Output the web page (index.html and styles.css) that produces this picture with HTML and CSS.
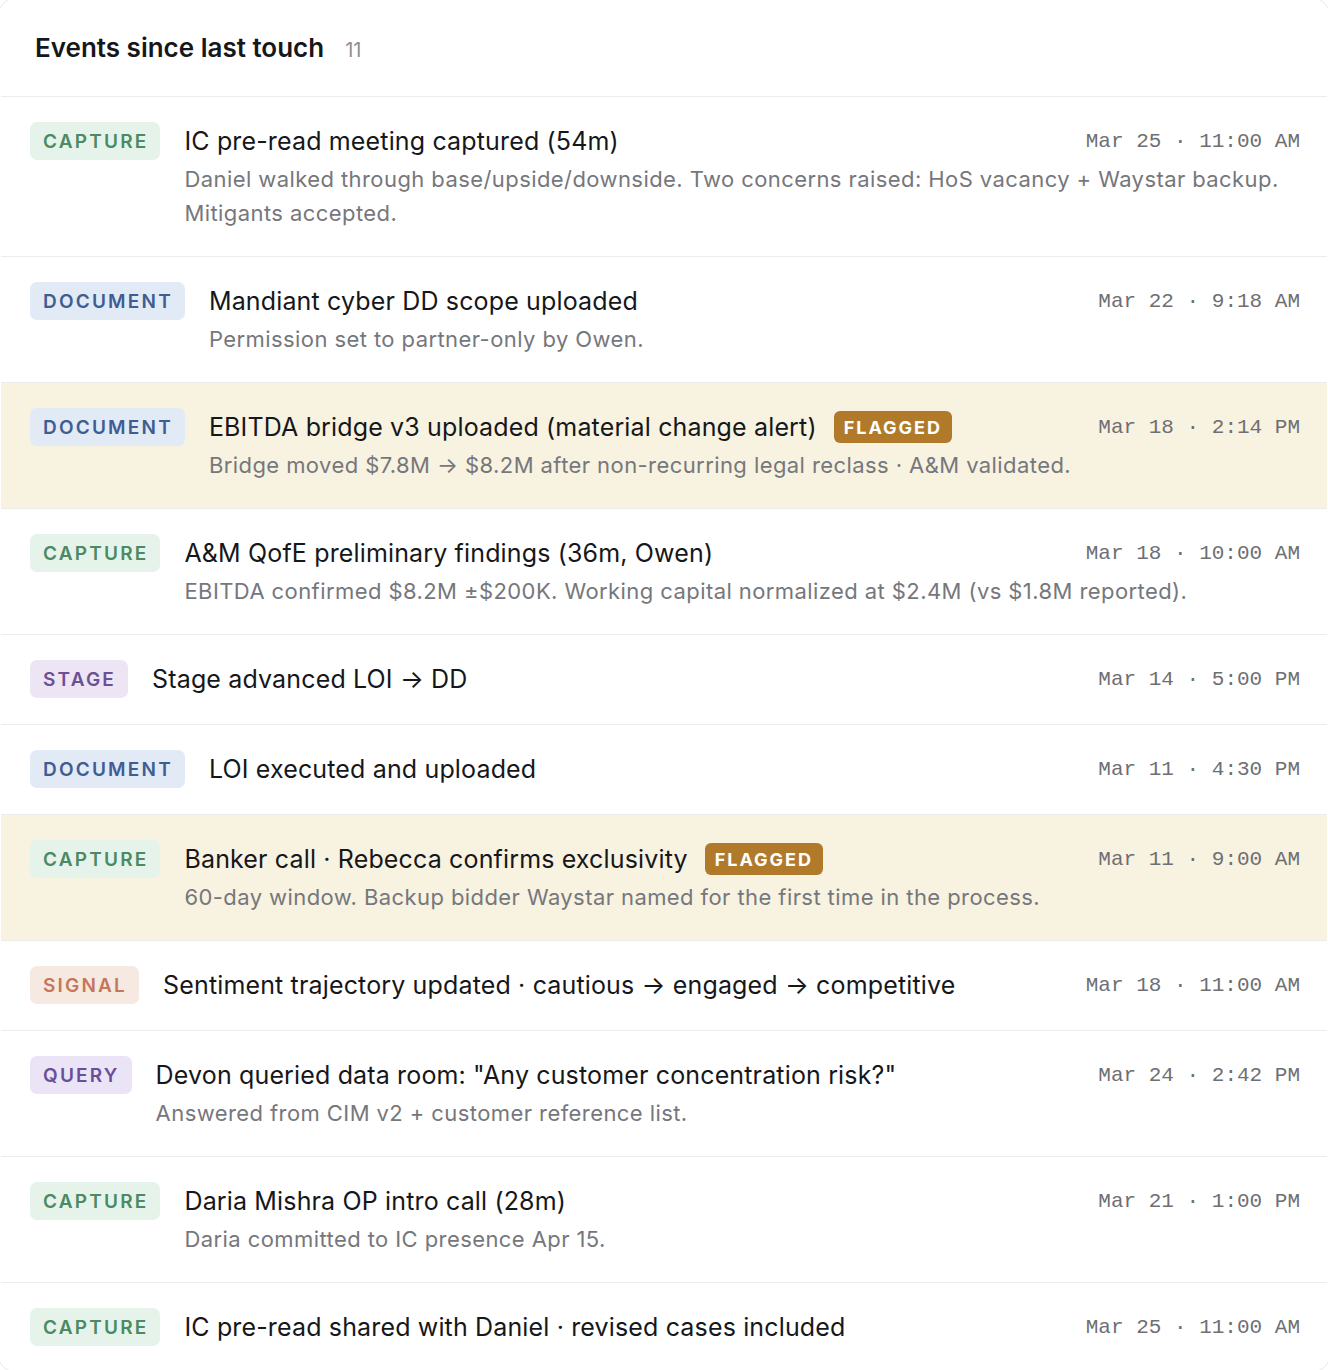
FILE: index.html
```html
<!DOCTYPE html>
<html lang="en">
<head>
<meta charset="utf-8">
<title>Events since last touch</title>
<link rel="stylesheet" href="styles.css">
</head>
<body>
<section class="card">
  <header class="card-head">
    <h2 class="card-title">Events since last touch</h2>
    <span class="count">11</span>
  </header>
  <ul class="events">
    <li class="event">
      <span class="tag tag-capture">Capture</span>
      <div class="body">
        <div class="head"><span class="title">IC pre-read meeting captured (54m)</span><time class="when">Mar 25 · 11:00 AM</time></div>
        <p class="desc">Daniel walked through base/upside/downside. Two concerns raised: HoS vacancy + Waystar backup. Mitigants accepted.</p>
      </div>
    </li>
    <li class="event">
      <span class="tag tag-document">Document</span>
      <div class="body">
        <div class="head"><span class="title">Mandiant cyber DD scope uploaded</span><time class="when">Mar 22 · 9:18 AM</time></div>
        <p class="desc">Permission set to partner-only by Owen.</p>
      </div>
    </li>
    <li class="event flagged">
      <span class="tag tag-document">Document</span>
      <div class="body">
        <div class="head"><span class="title">EBITDA bridge v3 uploaded (material change alert)</span><span class="flag">Flagged</span><time class="when">Mar 18 · 2:14 PM</time></div>
        <p class="desc">Bridge moved $7.8M → $8.2M after non-recurring legal reclass · A&amp;M validated.</p>
      </div>
    </li>
    <li class="event">
      <span class="tag tag-capture">Capture</span>
      <div class="body">
        <div class="head"><span class="title">A&amp;M QofE preliminary findings (36m, Owen)</span><time class="when">Mar 18 · 10:00 AM</time></div>
        <p class="desc">EBITDA confirmed $8.2M ±$200K. Working capital normalized at $2.4M (vs $1.8M reported).</p>
      </div>
    </li>
    <li class="event">
      <span class="tag tag-stage">Stage</span>
      <div class="body">
        <div class="head"><span class="title">Stage advanced LOI → DD</span><time class="when">Mar 14 · 5:00 PM</time></div>
      </div>
    </li>
    <li class="event">
      <span class="tag tag-document">Document</span>
      <div class="body">
        <div class="head"><span class="title">LOI executed and uploaded</span><time class="when">Mar 11 · 4:30 PM</time></div>
      </div>
    </li>
    <li class="event flagged">
      <span class="tag tag-capture">Capture</span>
      <div class="body">
        <div class="head"><span class="title">Banker call · Rebecca confirms exclusivity</span><span class="flag">Flagged</span><time class="when">Mar 11 · 9:00 AM</time></div>
        <p class="desc">60-day window. Backup bidder Waystar named for the first time in the process.</p>
      </div>
    </li>
    <li class="event">
      <span class="tag tag-signal">Signal</span>
      <div class="body">
        <div class="head"><span class="title">Sentiment trajectory updated · cautious → engaged → competitive</span><time class="when">Mar 18 · 11:00 AM</time></div>
      </div>
    </li>
    <li class="event">
      <span class="tag tag-query">Query</span>
      <div class="body">
        <div class="head"><span class="title">Devon queried data room: "Any customer concentration risk?"</span><time class="when">Mar 24 · 2:42 PM</time></div>
        <p class="desc">Answered from CIM v2 + customer reference list.</p>
      </div>
    </li>
    <li class="event">
      <span class="tag tag-capture">Capture</span>
      <div class="body">
        <div class="head"><span class="title">Daria Mishra OP intro call (28m)</span><time class="when">Mar 21 · 1:00 PM</time></div>
        <p class="desc">Daria committed to IC presence Apr 15.</p>
      </div>
    </li>
    <li class="event">
      <span class="tag tag-capture">Capture</span>
      <div class="body">
        <div class="head"><span class="title">IC pre-read shared with Daniel · revised cases included</span><time class="when">Mar 25 · 11:00 AM</time></div>
      </div>
    </li>
  </ul>
</section>
</body>
</html>
```

FILE: styles.css
```css
* { box-sizing: border-box; }

html, body {
  margin: 0;
  padding: 0;
  background: #ffffff;
  overflow: hidden;
}

body {
  font-family: Inter, "Noto Sans", "Liberation Sans", sans-serif;
  color: #17181a;
}

.card {
  background: #ffffff;
  border: 1px solid #e8e8e6;
  border-radius: 24px;
  overflow: hidden;
  margin: -4px -4px 0 -4px;
  padding: 4px 4px 0 4px;
}

.card-head {
  display: flex;
  align-items: baseline;
  gap: 21px;
  height: 96px;
  padding: 30px 34px 0;
  border-bottom: 1px solid #ececea;
}

.card-title {
  margin: 0;
  font-size: 26px;
  font-weight: 600;
  line-height: 34px;
  color: #16171a;
}

.count {
  font-size: 20px;
  color: #8d8f94;
}

.events {
  list-style: none;
  margin: 0;
  padding: 0;
}

.event {
  display: flex;
  align-items: flex-start;
  gap: 24px;
  padding: 25px 27px 26px 29px;
  border-bottom: 1px solid #ececea;
}

.event.flagged {
  background: #f8f2e0;
}

.tag {
  flex: none;
  display: inline-flex;
  align-items: center;
  height: 38px;
  padding: 0 12px 0 13px;
  border-radius: 7px;
  font-size: 19px;
  font-weight: 600;
  letter-spacing: 2.2px;
  text-transform: uppercase;
}

.tag-capture { background: #e6f3ea; color: #4b8a62; }
.tag-document { background: #e2eaf5; color: #3f5d92; }
.tag-stage { background: #ede5f3; color: #6d4f96; }
.tag-signal { background: #f6e9e1; color: #c5775c; }
.tag-query { background: #ebe4f6; color: #6a4f98; }

.body {
  flex: 1;
  min-width: 0;
}

.head {
  display: flex;
  align-items: center;
  min-height: 38px;
}

.title {
  font-size: 25px;
  line-height: 38px;
  letter-spacing: 0.15px;
  color: #16171a;
}

.flag {
  margin-left: 17px;
  display: inline-flex;
  align-items: center;
  height: 32px;
  padding: 0 10px;
  border-radius: 6px;
  background: #b17a2b;
  color: #ffffff;
  font-size: 18px;
  font-weight: 700;
  letter-spacing: 2px;
  text-transform: uppercase;
}

.when {
  margin-left: auto;
  padding-left: 24px;
  flex: none;
  font-family: "Liberation Mono", "DejaVu Sans Mono", monospace;
  font-size: 21px;
  color: #6e6f73;
  white-space: nowrap;
}

.desc {
  margin: 2px 0 0;
  font-size: 22px;
  line-height: 34px;
  color: #76777c;
  letter-spacing: 0.42px;
}
```
